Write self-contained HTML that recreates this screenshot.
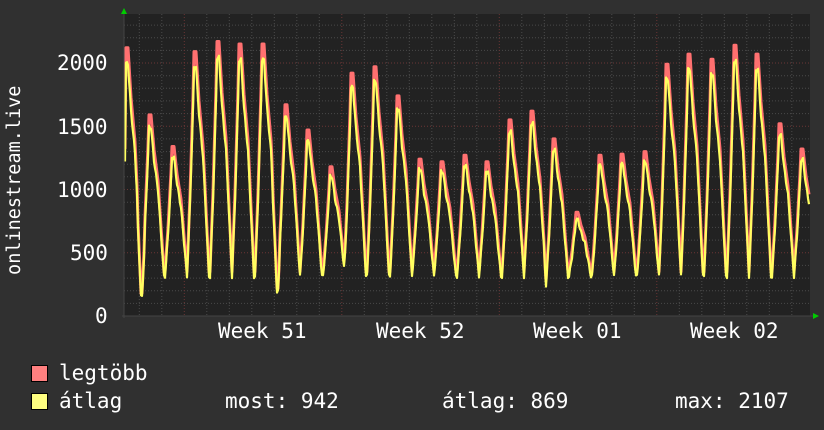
<!DOCTYPE html>
<html><head><meta charset="utf-8"><style>
html,body{margin:0;padding:0;background:#303030;}
body{width:824px;height:430px;overflow:hidden;position:relative;font-family:"DejaVu Sans Mono","Liberation Mono",monospace;color:#fff;}
.t{position:absolute;font-size:21px;line-height:1;white-space:pre;}
.box{position:absolute;width:15px;height:15px;border:1px solid #000;}
</style></head><body>
<svg id="g" width="824" height="430" style="position:absolute;left:0;top:0"></svg>
<div class="t" style="left:57px;top:53px">2000</div>
<div class="t" style="left:57px;top:117px">1500</div>
<div class="t" style="left:57px;top:180px">1000</div>
<div class="t" style="left:70px;top:243px">500</div>
<div class="t" style="left:95px;top:306px">0</div>
<div class="t" style="left:218px;top:321px">Week 51</div>
<div class="t" style="left:376px;top:321px">Week 52</div>
<div class="t" style="left:533px;top:321px">Week 01</div>
<div class="t" style="left:690px;top:321px">Week 02</div>
<div class="t" style="font-size:18.5px;left:-80px;top:171px;transform:rotate(-90deg);width:190px;text-align:center">onlinestream.live</div>
<div class="box" style="left:31px;top:365px;background:#ff8080"></div>
<div class="box" style="left:31px;top:393px;background:#ffff80"></div>
<div class="t" style="left:59px;top:363px">legtöbb</div>
<div class="t" style="left:59px;top:391px">átlag</div>
<div class="t" style="left:225px;top:391px">most: 942</div>
<div class="t" style="left:442px;top:391px">átlag: 869</div>
<div class="t" style="left:675px;top:391px">max: 2107</div>
<script>
var s='',L=124,R=810,T=14,B=316;
s+='<rect x="'+L+'" y="'+T+'" width="'+(R-L)+'" height="'+(B-T)+'" fill="#222"/>';
function y(v){return B-v*0.1265;}
for(var v=100;v<=2300;v+=100){var yy=y(v).toFixed(1);var maj=v%500==0;
s+='<line x1="'+L+'" x2="'+R+'" y1="'+yy+'" y2="'+yy+'" stroke="'+(maj?'#6a3535':'#4a4a4a')+'" stroke-dasharray="1,2"/>';}
for(var i=0;i<31;i++){var x=139.3+i*22.5;if(x>R)break;var maj=Math.abs((x-184)%157.5)<1;
s+='<line x1="'+x+'" x2="'+x+'" y1="'+T+'" y2="'+B+'" stroke="'+(maj?'#6a3535':'#4a4a4a')+'" stroke-dasharray="1,2"/>';}
var pk=[[127,2100],[150,1570],[173,1320],[195,2070],[218,2150],[240,2130],[263,2130],[286,1650],[308,1450],[331,1160],[352,1900],[375,1950],[398,1720],[420,1220],[442,1200],[465,1250],[487,1200],[510,1530],[532,1600],[554,1380],[577,800],[600,1250],[622,1260],[645,1280],[667,1970],[689,2050],[712,2010],[735,2120],[757,2050],[780,1500],[802,1300]];
var mins={141:160,200:300,276:200,548:260};
function val(x){var best=null;for(var k=0;k<pk.length;k++){var d=x-pk[k][0];if(d>-8&&d<=14){best=[d,pk[k][1]];}}
var mn=330;for(var m in mins){if(Math.abs(x-m)<4)mn=mins[m];}
if(!best)return mn;var d=best[0],p=best[1],f;
if(d<-5)f=(d+8)/3*0.35;
else if(d<-1)f=0.35+(d+5)/4*0.6;
else if(d<=1)f=1;
else if(d<=4)f=1-0.22*(d-1)/3;
else if(d<=8)f=0.78-0.2*(d-4)/4;
else f=0.58-0.58*(d-8)/6;
f=Math.max(0,Math.min(1,f));return mn+(p-mn)*f;}
var pr=[],py=[];
for(var x=L+1;x<R;x++){var v=val(x);if(x==L+1)v=1300;var w=Math.sin(x*1.7)*15;
pr.push(x+','+y(v+20).toFixed(1));py.push(x+','+y(v*0.95+w).toFixed(1));}
s+='<polyline points="'+pr.join(' ')+'" fill="none" stroke="#ff7070" stroke-width="3" stroke-linejoin="round"/>';
s+='<polyline points="'+py.join(' ')+'" fill="none" stroke="#ffff60" stroke-width="2.2" stroke-linejoin="round"/>';
s+='<line x1="'+L+'" x2="'+L+'" y1="12" y2="'+(B+2)+'" stroke="#444"/>';
s+='<line x1="'+(L-2)+'" x2="815" y1="'+B+'" y2="'+B+'" stroke="#444"/>';
s+='<polygon points="121,14 127,14 124,8" fill="#0c0"/>';
s+='<polygon points="813,313 813,319 819,316" fill="#0c0"/>';
document.getElementById('g').innerHTML=s;
</script>
</body></html>
